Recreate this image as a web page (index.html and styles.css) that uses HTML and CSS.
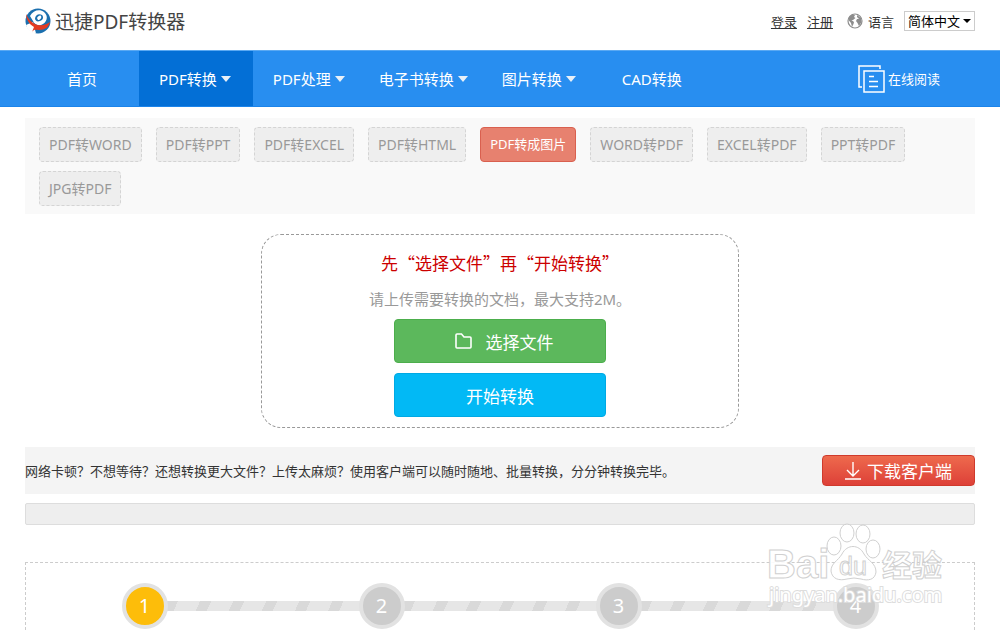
FILE: index.html
```html
<!DOCTYPE html>
<html lang="zh-CN">

<head>
    <meta charset="UTF-8">
    <meta name="viewport" content="width=device-width, initial-scale=1.0">
    <title>迅捷PDF转换器</title>
    <link rel="stylesheet" href="styles.css">
</head>

<body>

<header class="topbar">
    <a class="logo" href="#">
        <svg width="26" height="26" viewBox="0 0 26 26" aria-hidden="true">
            <circle cx="13" cy="13" r="12.500" fill="#1b6fae"/>
            <path d="M1 17L8 14L11 25.500C6 25 2 22 1 17Z" fill="#fff"/>
            <path d="M5 8C8 2 15 1 19 4C24 8 22 15 16 17C13 18 9 16 8 13Z" fill="#fff"/>
            <path d="M10 11C10 7 14 5 17 7C19 9 18 12 15 13C12 14 11 13 10 11Z" fill="#1b6fae"/>
            <path d="M12 10C13 8 15 7 16 8C17 10 15 12 13 12Z" fill="#fff"/>
            <path d="M1 6C3 11 8 16 13 17C18 18 22 16 25 14C24 19 20 22 14 22C11 22 9 21 7 24L9 19C4 16 1 11 1 6Z" fill="#e23b22"/>
        </svg>
        <span>迅捷PDF转换器</span>
    </a>
    <div class="user-links">
        <a href="#">登录</a>
        <a href="#">注册</a>
        <label class="lang-label" for="language">
            <svg width="16" height="16" viewBox="0 0 16 16" aria-hidden="true">
                <circle cx="8" cy="8" r="7" fill="#fff" stroke="#8d8d8d" stroke-width="1.200"/>
                <path d="M2 4L5 1.500L8 2L7 4L8.500 5L6 7L4.500 7L7 9L6.500 11L5 14L4 10L1.500 7ZM10 2L14 5L14.500 9L12 13L10.500 10L9 8L10 6L12 6L10 4Z" fill="#8d8d8d"/>
            </svg>
            语言
        </label>
        <div class="lang-select">
            <select name="language" id="language">
                <option value="zh">简体中文</option>
                <option value="en">English</option>
            </select>
        </div>
    </div>
</header>

<nav class="navbar">
    <a class="nav-item home" href="#">首页</a>
    <a class="nav-item has-menu active" href="#">PDF转换</a>
    <a class="nav-item has-menu" href="#">PDF处理</a>
    <a class="nav-item has-menu" href="#">电子书转换</a>
    <a class="nav-item has-menu" href="#">图片转换</a>
    <a class="nav-item plain" href="#">CAD转换</a>
    <a class="reader" href="#">
        <svg width="27" height="28" viewBox="0 0 27 28" fill="none" stroke="#fff" aria-hidden="true">
            <path d="M22 4V1H1V22H4" stroke-width="1.500"/>
            <rect x="6" y="6" width="20" height="21" stroke-width="1.500"/>
            <path d="M11 11.500H16M11 16.500H20M11 21.500H20" stroke-width="1.500"/>
        </svg>
        在线阅读
    </a>
</nav>

<main>
    <section class="tabs">
        <a class="tab" href="#">PDF转WORD</a>
        <a class="tab" href="#">PDF转PPT</a>
        <a class="tab" href="#">PDF转EXCEL</a>
        <a class="tab" href="#">PDF转HTML</a>
        <a class="tab active" href="#">PDF转成图片</a>
        <a class="tab" href="#">WORD转PDF</a>
        <a class="tab" href="#">EXCEL转PDF</a>
        <a class="tab" href="#">PPT转PDF</a>
        <a class="tab" href="#">JPG转PDF</a>
    </section>

    <section class="upload">
        <h1>先“选择文件”再“开始转换”</h1>
        <p>请上传需要转换的文档，最大支持2M。</p>
        <button class="btn choose" type="button">
            <svg width="17" height="16" viewBox="0 0 17 16" fill="none" stroke="#fff" stroke-width="1.600" aria-hidden="true">
                <path d="M1 2Q1 1 2 1H6.500L9 4H15Q16 4 16 5V14Q16 15 15 15H2Q1 15 1 14Z"/>
            </svg>
            选择文件
        </button>
        <button class="btn start" type="button">开始转换</button>
    </section>

    <section class="client">
        <p>网络卡顿？不想等待？还想转换更大文件？上传太麻烦？使用客户端可以随时随地、批量转换，分分钟转换完毕。</p>
        <a class="download" href="#">
            <svg width="16" height="18" viewBox="0 0 16 18" fill="none" stroke="#fff" stroke-width="1.400" aria-hidden="true">
                <path d="M8 0V13.500M2 8L8 14L14 8M0 17H16"/>
            </svg>
            下载客户端
        </a>
    </section>

    <div class="bar"></div>

    <section class="steps">
        <ol>
            <li class="current"><span>1</span></li>
            <li><span>2</span></li>
            <li><span>3</span></li>
            <li><span>4</span></li>
        </ol>
    </section>
</main>

<svg class="watermark" width="190" height="90" viewBox="0 0 190 90" aria-hidden="true">
    <g class="mark">
        <text class="brand" x="4" y="58">Bai</text>
        <ellipse cx="71" cy="26" rx="7" ry="9"/>
        <ellipse cx="84" cy="13" rx="7" ry="9"/>
        <ellipse cx="100" cy="14" rx="7" ry="9"/>
        <ellipse cx="110" cy="29" rx="7" ry="9"/>
        <path d="M79 34C84 24 96 24 101 34C105 41 113 43 113 52C112 60 105 61 98 59Q91 57 84 59C76 61 69 59 68 51C68 43 75 41 79 34Z"/>
        <text class="du" x="76" y="55">du</text>
        <text class="exp" x="119" y="56">经验</text>
    </g>
    <text class="site" x="6" y="82">jingyan.baidu.com</text>
</svg>

</body>
</html>
```

FILE: styles.css
```css
* {
    box-sizing: border-box;
}

body {
    font-family: "Noto Sans", "Noto Sans CJK SC", sans-serif;
    font-size: 13px;
    color: #333;
    margin: 0;
    background-color: #fff;
    min-height: 100vh;
    display: flex;
    flex-direction: column;
    position: relative;
}

a {
    color: inherit;
    text-decoration: none;
}

.topbar {
    display: flex;
    justify-content: space-between;
    align-items: center;
    height: 50px;
    padding: 0 25px 8px;
}

.logo {
    display: flex;
    align-items: center;
    gap: 4px;
    font-size: 19px;
    color: #444;
}

.user-links {
    display: flex;
    align-items: center;
    gap: 10px;
}

.user-links a {
    text-decoration: underline;
}

.lang-label {
    display: flex;
    align-items: center;
    gap: 5px;
    margin-left: 4px;
}

.lang-select {
    position: relative;
}

.lang-select select {
    appearance: none;
    display: block;
    width: 71px;
    height: 20px;
    padding: 0 0 0 3px;
    border: 1px solid #ccc;
    background-color: #fff;
    font-family: inherit;
    font-size: 13px;
    line-height: 18px;
    color: #000;
}

.lang-select::after {
    content: "";
    position: absolute;
    right: 4px;
    top: 8px;
    border: 4px solid transparent;
    border-top-color: #000;
    border-bottom: 0;
    pointer-events: none;
}

.navbar {
    display: flex;
    height: 57px;
    padding: 0 25px;
    background-color: #288ef0;
    border-top: 1px solid #5aa9f3;
    border-bottom: 1px solid #1b84ea;
    color: #fff;
    font-size: 15px;
}

.nav-item {
    display: flex;
    align-items: center;
    gap: 4px;
    padding: 0 14px 0 20px;
}

.nav-item.home {
    padding: 0 42px;
}

.nav-item.plain {
    padding: 0 32px;
}

.nav-item.active {
    background-color: #036fd6;
    padding-right: 22px;
}

.nav-item.has-menu::after {
    content: "";
    border: 5px solid transparent;
    border-top: 6px solid #e8f0f8;
    border-bottom: 0;
}

.reader {
    display: flex;
    align-items: center;
    gap: 3px;
    margin-left: auto;
    margin-right: 35px;
    font-size: 13px;
}

main {
    flex: 1;
    display: flex;
    flex-direction: column;
    padding: 11px 25px 0;
}

.tabs {
    display: flex;
    flex-wrap: wrap;
    gap: 9px 14px;
    padding: 9px 14px 8px;
    background-color: #f9f9f9;
}

.tab {
    height: 35px;
    line-height: 33px;
    padding: 0 9px;
    border: 1px dashed #d4d4d4;
    border-radius: 4px;
    background-color: #eee;
    color: #999;
    font-size: 14px;
}

.tab.active {
    border: 1px solid #d9604f;
    background-color: #e7816f;
    color: #fff;
    font-size: 13px;
}

.upload {
    display: flex;
    flex-direction: column;
    align-items: center;
    width: 100%;
    max-width: 478px;
    margin: 20px auto 0;
    padding: 16px 0 10px;
    border: 1px dashed #999;
    border-radius: 20px;
}

.upload h1 {
    margin: 0;
    font-family: "Noto Sans CJK SC", sans-serif;
    font-size: 17px;
    font-weight: normal;
    line-height: 24px;
    color: #c00;
}

.upload p {
    margin: 12px 0 8px;
    font-size: 15px;
    line-height: 24px;
    color: #999;
}

.btn {
    display: flex;
    justify-content: center;
    align-items: center;
    gap: 14px;
    width: 212px;
    height: 44px;
    padding: 0;
    border-radius: 4px;
    font-family: inherit;
    font-size: 17px;
    color: #fff;
    cursor: pointer;
}

.choose {
    padding-left: 8px;
    border: 1px solid #4cae4c;
    background-color: #5cb85c;
}

.start {
    margin-top: 10px;
    border: 1px solid #00a9e4;
    background-color: #02b9f5;
}

.client {
    display: flex;
    justify-content: space-between;
    align-items: center;
    height: 47px;
    margin-top: 19px;
    background-color: #f4f4f4;
}

.client p {
    margin: 0;
}

.download {
    display: flex;
    justify-content: center;
    align-items: center;
    gap: 6px;
    width: 153px;
    height: 31px;
    border: 1px solid #cf3a2c;
    border-radius: 4px;
    background: linear-gradient(#ee6a4d, #dd4038);
    color: #fff;
    font-size: 17px;
}

.bar {
    height: 22px;
    margin-top: 9px;
    border: 1px solid #ddd;
    border-radius: 2px;
    background-color: #eee;
}

.steps {
    flex: 1;
    margin-top: 37px;
    padding-top: 20px;
    border: 1px dashed #ccc;
    border-bottom: 0;
}

.steps ol {
    display: grid;
    grid-template-columns: repeat(4, 1fr);
    margin: 0;
    padding: 0;
    list-style: none;
}

.steps li {
    display: flex;
    justify-content: center;
    position: relative;
}

/* striped line to the next circle */
.steps li:not(:last-child)::after {
    content: "";
    position: absolute;
    left: 50%;
    top: 18px;
    width: 100%;
    height: 10px;
    background: repeating-linear-gradient(115deg, #e6e6e6 0 20px, #d9d9d9 20px 30px);
}

.steps span {
    z-index: 1;
    width: 46px;
    height: 46px;
    border: 4px solid #e2e2e2;
    border-radius: 50%;
    background-color: #ccc;
    color: #fff;
    font-size: 20px;
    line-height: 38px;
    text-align: center;
}

.steps .current span {
    background-color: #fdbd0a;
}

.watermark {
    position: absolute;
    right: 47px;
    top: 520px;
    z-index: 2;
    pointer-events: none;
}

.mark {
    fill: #fff;
    stroke: #ccc;
    stroke-width: 1px;
    opacity: 0.9;
}

.brand {
    font-family: "Liberation Sans", sans-serif;
    font-size: 40px;
    font-weight: bold;
}

.du {
    font-family: "Liberation Sans", sans-serif;
    font-size: 25px;
}

.exp {
    font-family: "Noto Sans CJK SC", sans-serif;
    font-size: 30px;
    font-weight: bold;
}

.site {
    font-family: "Noto Sans", sans-serif;
    font-size: 20px;
    fill: #fff;
    stroke: #ddd;
    stroke-width: 2px;
    paint-order: stroke;
}
```
